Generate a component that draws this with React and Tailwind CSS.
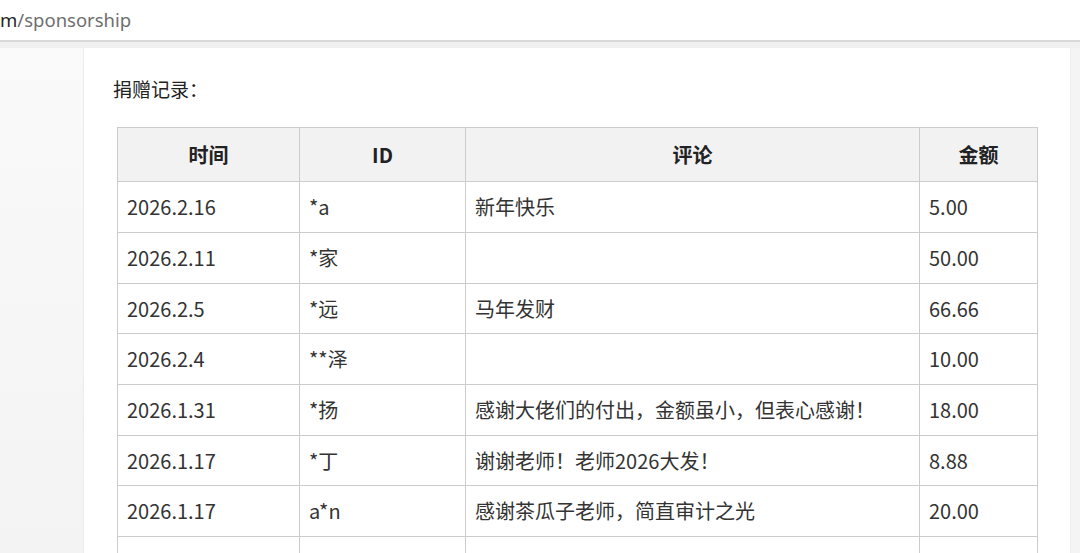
import React from 'react'

const rows = [
  { time: '2026.2.16', id: '*a', note: '新年快乐', amount: '5.00', h: 'h-[51px]' },
  { time: '2026.2.11', id: '*家', note: '', amount: '50.00', h: 'h-[51px]' },
  { time: '2026.2.5', id: '*远', note: '马年发财', amount: '66.66', h: 'h-[50px]' },
  { time: '2026.2.4', id: '**泽', note: '', amount: '10.00', h: 'h-[51px]' },
  { time: '2026.1.31', id: '*扬', note: '感谢大佬们的付出，金额虽小，但表心感谢！', amount: '18.00', h: 'h-[51px]' },
  { time: '2026.1.17', id: '*丁', note: '谢谢老师！老师2026大发！', amount: '8.88', h: 'h-[50px]' },
  { time: '2026.1.17', id: 'a*n', note: '感谢茶瓜子老师，简直审计之光', amount: '20.00', h: 'h-[51px]' },
  { time: '', id: '*', note: '', amount: '', h: 'h-[51px]' },
]

const cjk = { fontFamily: '"Noto Sans CJK SC", "Noto Sans", sans-serif' }

export default function App() {
  return (
    <div className="h-[553px] w-[1080px] overflow-hidden bg-white flex flex-col" style={cjk}>
      {/* Address bar */}
      <div className="h-[42px] shrink-0 flex items-center bg-white border-b-2 border-[#d9d9d9]">
        <span className="text-[18.5px] leading-none" style={{ fontFamily: '"Noto Sans", sans-serif' }}>
          <span className="text-[#1f1f1f]">m</span>
          <span className="text-[#6e6e6e]">/sponsorship</span>
        </span>
      </div>
      <div className="h-[6px] shrink-0 bg-[#f0f0f0]" />

      {/* Page */}
      <div className="flex flex-1 min-h-0">
        <div className="w-[84px] shrink-0 bg-gradient-to-b from-[#fafafa] to-[#f3f3f3] border-r border-[#ececec]" />
        <main className="flex-1 bg-white pl-[29px] pt-[28px]">
          <h2 className="text-[19px] leading-[26px] text-[#222]">捐赠记录：</h2>
          <table className="mt-[25px] ml-[4px] border-collapse text-[20px] text-[#333] table-fixed w-[920px]">
            <colgroup>
              <col className="w-[182px]" />
              <col className="w-[166px]" />
              <col className="w-[454px]" />
              <col className="w-[118px]" />
            </colgroup>
            <thead>
              <tr className="h-[54px] bg-[#f2f2f2]">
                {['时间', 'ID', '评论', '金额'].map(t => (
                  <th key={t} className="border border-[#cccccc] font-bold text-[#222] text-center">
                    {t}
                  </th>
                ))}
              </tr>
            </thead>
            <tbody>
              {rows.map((r, i) => (
                <tr key={i} className={r.h}>
                  <td className="border border-[#cccccc] pl-[9px]">{r.time}</td>
                  <td className="border border-[#cccccc] pl-[9px]">{r.id}</td>
                  <td className="border border-[#cccccc] pl-[9px]">{r.note}</td>
                  <td className="border border-[#cccccc] pl-[9px]">{r.amount}</td>
                </tr>
              ))}
            </tbody>
          </table>
        </main>
        <div className="w-[10px] shrink-0 bg-[#f4f4f4] border-l border-[#ececec]" />
      </div>
    </div>
  )
}
